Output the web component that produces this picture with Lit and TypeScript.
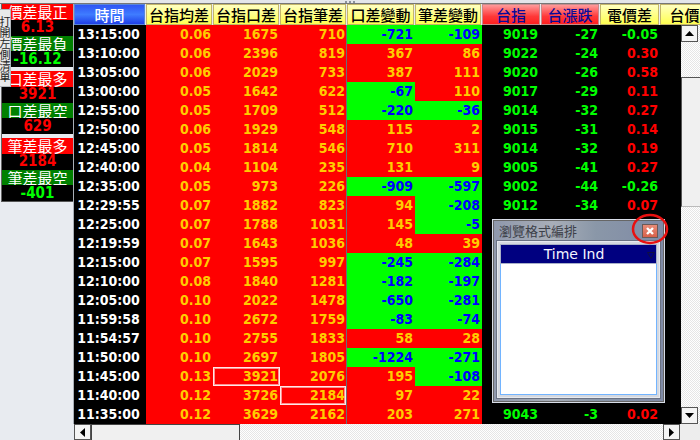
import { LitElement, html, css, nothing } from "lit";
import { customElement } from "lit/decorators.js";

type Row = { t: string; avg: string; kou: number; bi: number; dk: number; db: number; hk?: boolean; hb?: boolean; idx?: string; chg?: string; diff?: string };

const rows: Row[] = [
  { t: "13:15:00", avg: "0.06", kou: 1675, bi: 710, dk: -721, db: -109, idx: "9019", chg: "-27", diff: "-0.05" },
  { t: "13:10:00", avg: "0.06", kou: 2396, bi: 819, dk: 367, db: 86, idx: "9022", chg: "-24", diff: "0.30" },
  { t: "13:05:00", avg: "0.06", kou: 2029, bi: 733, dk: 387, db: 111, idx: "9020", chg: "-26", diff: "0.58" },
  { t: "13:00:00", avg: "0.05", kou: 1642, bi: 622, dk: -67, db: 110, idx: "9017", chg: "-29", diff: "0.11" },
  { t: "12:55:00", avg: "0.05", kou: 1709, bi: 512, dk: -220, db: -36, idx: "9014", chg: "-32", diff: "0.27" },
  { t: "12:50:00", avg: "0.06", kou: 1929, bi: 548, dk: 115, db: 2, idx: "9015", chg: "-31", diff: "0.14" },
  { t: "12:45:00", avg: "0.05", kou: 1814, bi: 546, dk: 710, db: 311, idx: "9014", chg: "-32", diff: "0.19" },
  { t: "12:40:00", avg: "0.04", kou: 1104, bi: 235, dk: 131, db: 9, idx: "9005", chg: "-41", diff: "0.27" },
  { t: "12:35:00", avg: "0.05", kou: 973, bi: 226, dk: -909, db: -597, idx: "9002", chg: "-44", diff: "-0.26" },
  { t: "12:29:55", avg: "0.07", kou: 1882, bi: 823, dk: 94, db: -208, idx: "9012", chg: "-34", diff: "0.07" },
  { t: "12:25:00", avg: "0.07", kou: 1788, bi: 1031, dk: 145, db: -5 },
  { t: "12:19:59", avg: "0.07", kou: 1643, bi: 1036, dk: 48, db: 39 },
  { t: "12:15:00", avg: "0.07", kou: 1595, bi: 997, dk: -245, db: -284 },
  { t: "12:10:00", avg: "0.08", kou: 1840, bi: 1281, dk: -182, db: -197 },
  { t: "12:05:00", avg: "0.10", kou: 2022, bi: 1478, dk: -650, db: -281 },
  { t: "11:59:58", avg: "0.10", kou: 2672, bi: 1759, dk: -83, db: -74 },
  { t: "11:54:57", avg: "0.10", kou: 2755, bi: 1833, dk: 58, db: 28 },
  { t: "11:50:00", avg: "0.10", kou: 2697, bi: 1805, dk: -1224, db: -271 },
  { t: "11:45:00", avg: "0.13", kou: 3921, bi: 2076, dk: 195, db: -108, hk: true },
  { t: "11:40:00", avg: "0.12", kou: 3726, bi: 2184, dk: 97, db: 22, hb: true },
  { t: "11:35:00", avg: "0.12", kou: 3629, bi: 2162, dk: 203, db: 271, idx: "9043", chg: "-3", diff: "0.02" },
];

const groups = [
  [["價差最正", "pos"], ["6.13", "red"], ["價差最負", "neg"], ["-16.12", "green"]],
  [["口差最多", "pos"], ["3921", "red"], ["口差最空", "neg"], ["629", "red"]],
  [["筆差最多", "pos"], ["2184", "red"], ["筆差最空", "neg"], ["-401", "green"]],
];

const heads: [string, string][] = [
  ["時間", "blue"], ["台指均差", ""], ["台指口差", ""], ["台指筆差", ""], ["口差變動", ""], ["筆差變動", ""],
  ["台指", "rose"], ["台漲跌", "rose"], ["電價差", ""], ["台價差", ""],
];

@customElement("app-root")
export class AppRoot extends LitElement {
  static styles = css`
    :host { display: block; width: 700px; height: 440px; overflow: hidden; position: relative; background: #e8ebf0; font-family: "DejaVu Sans Condensed", "DejaVu Sans", sans-serif; --cols: 72px 67px 67px 67px 68px 67px 59px 59px 60px 65px; }
    .strip { height: 3px; background: #e4e6ea; border-bottom: 1px solid #777; display: flex; justify-content: center; gap: 1px; }
    .grip { display: flex; gap: 2px; padding-top: 1px; margin-left: -1px; }
    .grip i { width: 2px; height: 2px; background: #8a929c; }
    .main { display: flex; height: 420px; }
    .left { width: 74px; flex: none; box-sizing: border-box; padding-left: 1px; border-right: 1px solid #a8aeb6; }
    .stats { display: flex; flex-direction: column; gap: 4px; border-left: 1px solid #666; border-bottom: 1px solid #555; width: 72px; box-sizing: border-box; }
    .group { display: grid; grid-auto-rows: 15.75px; }
    .stat { display: flex; align-items: center; justify-content: center; white-space: nowrap; line-height: 15px; }
    .stat.pos, .stat.neg { font: 15px/15px "Noto Sans CJK TC", sans-serif; color: #fff; }
    .stat.pos { background: #ff0000; }
    .stat.neg { background: #008000; }
    .stat.red, .stat.green { background: #000; font-weight: 700; font-size: 15px; }
    .stat.red { color: #ff0000; }
    .stat.green { color: #00ff00; }
    .tab { position: absolute; left: 0; top: 9px; width: 11px; height: 78px; box-sizing: border-box; background: #e9e9e9; border: 1px solid #b4b8bc; border-left: 0; writing-mode: vertical-rl; text-orientation: upright; font: 11px/10px "Noto Sans CJK TC", sans-serif; color: #222; padding-top: 6px; }
    .grid { flex: 1; min-width: 0; display: flex; flex-direction: column; }
    .head { display: grid; grid-template-columns: var(--cols); height: 21px; flex: none; overflow: hidden; }
    .hc { box-sizing: border-box; margin-right: 1px; display: flex; align-items: center; justify-content: center; white-space: nowrap; font: 500 15px/1 "Noto Sans CJK TC", sans-serif; color: #000; background: linear-gradient(#ffffc0, #ffff50); border: 1px solid #c4b66a; }
    .hc.blue { color: #fff; background: linear-gradient(#2f55f5, #3f7cff 50%, #1f3fe8); border-color: #5a86d8; }
    .hc.rose { color: #0a0a9a; background: linear-gradient(#ff9a9a, #ff3838 60%, #ff2020); border-color: #c88a8a; }
    .body { flex: 1; min-height: 0; display: flex; }
    .rows { flex: 1; min-width: 0; overflow: hidden; background: #000; }
    .row { display: grid; grid-template-columns: var(--cols); height: 19px; }
    .c { box-sizing: border-box; display: flex; align-items: center; justify-content: flex-end; padding-right: 2px; font-weight: 700; font-size: 14px; line-height: 19px; white-space: nowrap; }
    .time { color: #fff; justify-content: center; padding-right: 3px; background: #000; }
    .up { background: #ff0000; color: #ffcc00; }
    .down { background: #00ff00; color: #0000ff; }
    .bl { border-right: 1px solid #66707a; padding-right: 1px; }
    .hl { box-shadow: inset 0 0 0 1px #ffe8e8, inset 0 0 0 2px #ff9090; }
    .idx { color: #00ff00; padding-right: 3px; }
    .chg { color: #00ff00; }
    .dr { color: #ff0000; }
    .dg { color: #00ff00; }
    .vs { width: 19px; flex: none; display: flex; flex-direction: column; background: conic-gradient(#fff 25%, #e6e6e6 0 50%, #fff 0 75%, #e6e6e6 0) 0 0 / 2px 2px; }
    .btn { box-sizing: border-box; flex: none; background: #f4f4f4; border: 1px solid #555; display: flex; align-items: center; justify-content: center; }
    .vs .btn { height: 17px; width: 17px; }
    .vs .track { flex: none; height: 35px; }
    .vs .thumb { flex: none; height: 130px; width: 19px; box-sizing: border-box; background: #f0f0f0; border-top: 1px solid #555; border-left: 1px solid #555; border-bottom: 1px solid #bbb; }
    .vs .fill { flex: 1; }
    .hs { height: 16px; display: flex; margin-left: 74px; background: conic-gradient(#fff 25%, #e6e6e6 0 50%, #fff 0 75%, #e6e6e6 0) 0 0 / 2px 2px; }
    .hs .btn { width: 17px; height: 16px; flex: none; }
    .hs .thumb { width: 149px; flex: none; box-sizing: border-box; background: #f0f0f0; border: 1px solid #444; border-bottom: 0; }
    .hs .fill { flex: 1; }
    .hs .corner { width: 20px; flex: none; background: #ededed; }
    .ar { display: block; }
    .dlg { position: absolute; left: 492px; top: 219px; width: 173px; height: 184px; box-sizing: border-box; border: 1px solid #d8dde8; outline: 1px solid #666; outline-offset: -2px; background: linear-gradient(90deg, #8f98ac, #a8aeb8 35%, #8a97a8 60%, #7f8aa6); display: flex; flex-direction: column; padding: 0 4px 4px; }
    .tb { height: 21px; flex: none; display: flex; align-items: center; justify-content: space-between; padding: 0 2px; font: 13px/15px "Noto Sans CJK TC", sans-serif; color: #3c4048; }
    .close { width: 16px; height: 14px; box-sizing: border-box; border: 1px solid #6a5a58; background: linear-gradient(#e88c78, #d8604a); display: flex; align-items: center; justify-content: center; }
    .panel { flex: 1; min-height: 0; background: #d4d8e0; border: 1px solid #e6eaf0; padding: 2px; display: flex; flex-direction: column; outline: 1px solid #6a7284; }
    .panel-in { flex: 1; display: flex; flex-direction: column; border: 1px solid #72b4ff; border-top: 0; background: #fff; }
    .colh { height: 20px; flex: none; box-sizing: border-box; background: #000080; color: #f4f4ff; border: 1px solid #a8b0c8; display: flex; align-items: center; justify-content: center; font: 14px "DejaVu Sans", sans-serif; padding-right: 9px; position: relative; }
    .tri { position: absolute; right: 1px; top: 7px; }
    .ring { position: absolute; left: 631px; top: 213px; pointer-events: none; }
  `;

  private tone(v: number) { return v < 0 ? "down" : "up"; }

  render() {
    return html`
      <div class="strip"><div class="grip"><i></i><i></i><i></i></div></div>
      <div class="main">
        <div class="left">
          <div class="stats">
            ${groups.map(g => html`<div class="group">${g.map(([t, k]) => html`<div class="stat ${k}">${t}</div>`)}</div>`)}
          </div>
        </div>
        <div class="grid">
          <div class="head">${heads.map(([t, k]) => html`<div class="hc ${k}">${t}</div>`)}</div>
          <div class="body">
            <div class="rows">
              ${rows.map(r => html`<div class="row">
                <div class="c time">${r.t}</div>
                <div class="c up">${r.avg}</div>
                <div class="c up ${r.hk ? "hl" : ""}">${r.kou}</div>
                <div class="c up bl ${r.hb ? "hl" : ""}">${r.bi}</div>
                <div class="c ${this.tone(r.dk)}">${r.dk}</div>
                <div class="c ${this.tone(r.db)}">${r.db}</div>
                ${r.idx ? html`
                  <div class="c idx">${r.idx}</div>
                  <div class="c chg">${r.chg}</div>
                  <div class="c ${r.diff!.startsWith("-") ? "dg" : "dr"}">${r.diff}</div>` : nothing}
              </div>`)}
            </div>
            <div class="vs">
              <div class="btn"><svg class="ar" width="9" height="5"><path d="M4.5 0L9 5H0z" fill="#000"/></svg></div>
              <div class="track"></div>
              <div class="thumb"></div>
              <div class="fill"></div>
              <div class="btn"><svg class="ar" width="9" height="5"><path d="M0 0H9L4.5 5z" fill="#000"/></svg></div>
            </div>
          </div>
        </div>
      </div>
      <div class="hs">
        <div class="btn"><svg class="ar" width="5" height="9"><path d="M5 0V9L0 4.5z" fill="#000"/></svg></div>
        <div class="thumb"></div>
        <div class="fill"></div>
        <div class="btn"><svg class="ar" width="5" height="9"><path d="M0 0L5 4.5L0 9z" fill="#000"/></svg></div>
        <div class="corner"></div>
      </div>
      <div class="tab">打開左側清單</div>
      <div class="dlg">
        <div class="tb">
          <span>瀏覽格式編排</span>
          <div class="close"><svg width="8" height="8"><path d="M1 1L7 7M7 1L1 7" stroke="#fff" stroke-width="2.4"/></svg></div>
        </div>
        <div class="panel">
          <div class="colh">Time Ind<svg class="tri" width="8" height="7"><path d="M.5.5H7.5L4 6.5z" fill="none" stroke="#101040"/></svg></div>
          <div class="panel-in"></div>
        </div>
      </div>
      <svg class="ring" width="38" height="32"><ellipse cx="19" cy="16" rx="17" ry="14" fill="none" stroke="#e81010" stroke-width="2.5"/></svg>
    `;
  }
}
